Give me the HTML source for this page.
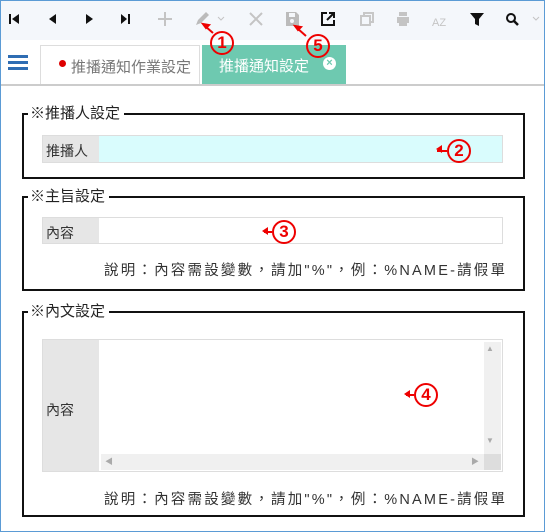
<!DOCTYPE html>
<html><head><meta charset="utf-8"><style>
*{box-sizing:border-box;margin:0;padding:0}
body{width:545px;height:532px;overflow:hidden;background:#fff;font-family:"Liberation Sans","Noto Sans CJK TC",sans-serif;position:relative}
.frame{position:absolute;left:0;top:0;width:545px;height:532px;border:1px solid #5b9bd5}
.tb{position:absolute;left:1px;top:1px;width:543px;height:39px;background:#f4f7fb}
.tab1{position:absolute;left:40px;top:45px;width:160px;height:41px;background:#fff;border:1px solid #ddd;border-bottom:none;font-size:15px;color:#777;padding:10px 0 0 30px}
.tab2{position:absolute;left:202px;top:45px;width:144px;height:39px;background:#6ec9b0;color:#fff;font-size:15px;padding:10px 0 0 17px}
.line{position:absolute;left:1px;top:84px;width:543px;height:2px;background:#ccc}
.box{position:absolute;left:22px;width:503px;border:2px solid #111}
.lg{position:absolute;left:4px;top:-10px;background:#fff;padding:0 4px 0 2px;font-size:15px;color:#222;line-height:18px}
.f{position:absolute;left:42px;width:461px;border:1px solid #ddd;background:#fff}
.f .l{position:absolute;left:0;top:0;bottom:0;width:56px;background:#e6e6e6;font-size:14px;color:#333;padding-left:3px}
.help{position:absolute;left:104px;font-size:14.5px;color:#333;letter-spacing:2.2px;white-space:nowrap}
.c{position:absolute;width:24px;height:24px;border:2px solid #e00;border-radius:50%;color:#e00;font-weight:bold;font-size:17px;text-align:center;line-height:20px;background:transparent}
.ar{position:absolute;height:2px;background:#e00}
</style></head><body>
<div class="tb"></div>
<svg style="position:absolute;left:0;top:0" width="545" height="40">
<g fill="#111">
<rect x="9" y="14" width="2" height="10"/><path d="M19 14v10l-7-5z"/>
<path d="M56 14v10l-7-5z"/>
<path d="M86 14v10l7-5z"/>
<path d="M121 14v10l6-5z"/><rect x="128" y="14" width="2" height="10"/>
</g>
<g stroke="#c4c4c4" stroke-width="2" fill="none">
<path d="M165 12v14M158 19h14"/>
<path d="M250 13l12 12M262 13l-12 12"/>
<path d="M218 17l3 3 3-3" stroke-width="1"/>
<path d="M533 17l3 3 3-3" stroke-width="1"/>
</g>
<path d="M196 25l2-5 8-8 3 3-8 8z" fill="#bbb"/>
<path d="M286 12h10l3 3v11h-13z" fill="#bbb"/><rect x="289" y="13" width="6" height="4" fill="#f4f7fb"/><circle cx="292" cy="21" r="2" fill="#f4f7fb"/>
<g stroke="#111" stroke-width="2" fill="none"><path d="M327 13h-5v12h12v-5"/><path d="M327 20l7-7M329 13h5v5"/></g>
<g stroke="#c8c8c8" stroke-width="2" fill="none"><rect x="361" y="16" width="9" height="9"/><path d="M364 16v-3h9v9h-3"/></g>
<path d="M397 17h12v6h-2v3h-8v-3h-2z M399 12h8v4h-8z" fill="#c4c4c4"/>
<text x="432" y="26" font-size="11" fill="#c4c4c4" font-family="Liberation Sans">AZ</text>
<path d="M470 13h14l-5 6v7l-4-2v-5z" fill="#111"/>
<circle cx="511" cy="18" r="4" stroke="#111" stroke-width="2" fill="none"/><path d="M514 21l4 4" stroke="#111" stroke-width="2.5"/>
</svg>
<svg style="position:absolute;left:8px;top:55px" width="20" height="16"><g fill="#2f6db3"><rect y="0" width="20" height="3"/><rect y="6" width="20" height="3"/><rect y="12" width="20" height="3"/></g></svg>
<div class="tab1"><span style="position:absolute;left:18px;top:14px;width:7px;height:7px;border-radius:50%;background:#d00"></span>推播通知作業設定</div>
<div class="tab2">推播通知設定<span style="position:absolute;left:121px;top:12px;width:13px;height:13px;border-radius:50%;background:#fff;color:#6ec9b0;font-size:11px;line-height:13px;text-align:center;font-weight:bold">×</span></div>
<div class="line"></div>

<div class="box" style="top:113px;height:66px"><div class="lg">※推播人設定</div></div>
<div class="f" style="top:135px;height:28px;background:#d9fcfd"><div class="l" style="padding-top:5px">推播人</div></div>

<div class="box" style="top:196px;height:95px"><div class="lg">※主旨設定</div></div>
<div class="f" style="top:217px;height:27px"><div class="l" style="padding-top:5px">內容</div></div>
<div class="help" style="top:259px">說明：內容需設變數，請加"%"，例：%NAME-請假單</div>

<div class="box" style="top:311px;height:206px"><div class="lg">※內文設定</div></div>
<div class="f" style="top:339px;height:133px"><div class="l" style="padding-top:60px">內容</div>
<div style="position:absolute;left:441px;top:2px;width:17px;height:128px;background:#f0f0f0"></div>
<div style="position:absolute;left:58px;top:114px;width:383px;height:16px;background:#f0f0f0"></div>
<div style="position:absolute;left:441px;top:114px;width:17px;height:16px;background:#ddd"></div>
<span style="position:absolute;left:443px;top:4px;font-size:8px;color:#aaa">▲</span>
<span style="position:absolute;left:443px;top:96px;font-size:8px;color:#aaa">▼</span>
<span style="position:absolute;left:62px;top:116px;font-size:8px;color:#aaa">◀</span>
<span style="position:absolute;left:428px;top:116px;font-size:8px;color:#aaa">▶</span>
</div>
<div class="help" style="top:488px">說明：內容需設變數，請加"%"，例：%NAME-請假單</div>

<div class="c" style="left:210px;top:31px">1</div>
<svg style="position:absolute;left:0;top:0" width="545" height="532"><g stroke="#e00" stroke-width="2" fill="#e00">
<path d="M213 33l-8-7" /><path d="M203 24l6 1-3 3z"/>
<path d="M306 36l-9-8"/><path d="M295 26l6 1-3 3z"/>
</g></svg>
<div class="c" style="left:306px;top:34px">5</div>
<div class="c" style="left:447px;top:139px">2</div><div class="ar" style="left:437px;top:150px;width:10px"></div><span style="position:absolute;left:432px;top:145px;width:0;height:0;border:4px solid transparent;border-right:6px solid #e00"></span>
<div class="c" style="left:272px;top:220px">3</div><div class="ar" style="left:264px;top:231px;width:8px"></div><span style="position:absolute;left:258px;top:227px;width:0;height:0;border:4px solid transparent;border-right:6px solid #e00"></span>
<div class="c" style="left:414px;top:383px">4</div><div class="ar" style="left:406px;top:394px;width:8px"></div><span style="position:absolute;left:400px;top:390px;width:0;height:0;border:4px solid transparent;border-right:6px solid #e00"></span>
<div class="frame"></div>
</body></html>
